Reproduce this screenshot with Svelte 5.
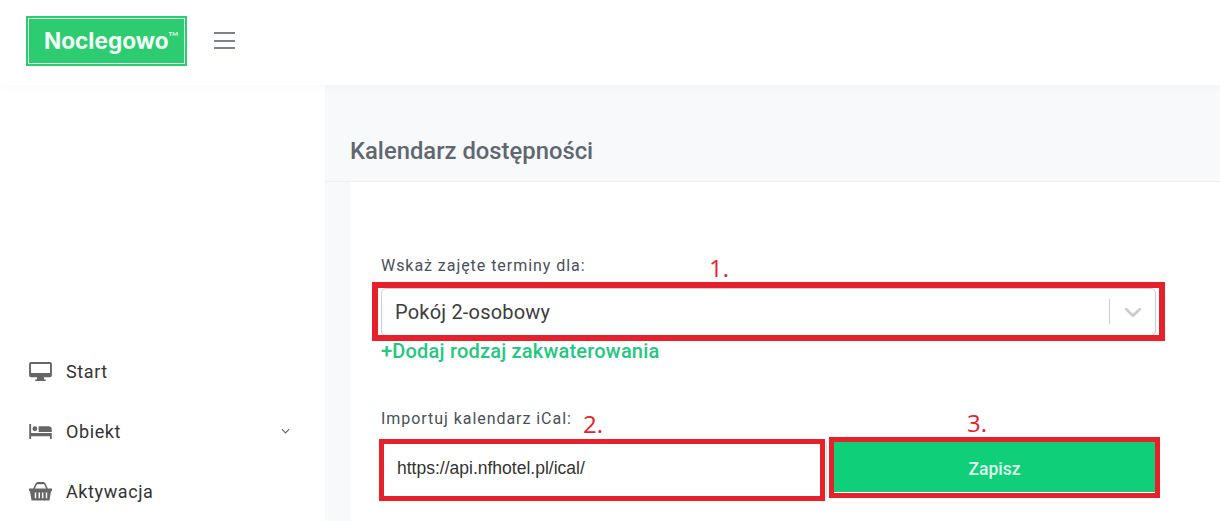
<script>
  // Sidebar entries, icons are drawn in the markup below
  const urlValue = "https://api.nfhotel.pl/ical/";
</script>

<div class="page">
  <header class="topbar">
    <div class="logo">
      <span class="logo-text">Noclegowo</span><span class="tm">TM</span>
    </div>
    <button class="burger" aria-label="Menu">
      <span></span><span></span><span></span>
    </button>
  </header>

  <div class="body">
    <aside class="sidebar">
      <nav>
        <a class="item" href="#start">
          <svg viewBox="0 0 24 20" width="22" height="19">
            <path fill="#666" d="M2 0h20a2 2 0 0 1 2 2v12a2 2 0 0 1-2 2h-6.500l.5 2.500h1.500V20H6.500v-1.500H8l.5-2.500H2a2 2 0 0 1-2-2V2a2 2 0 0 1 2-2zm0 2v9.500h20V2z" />
          </svg>
          <span>Start</span>
        </a>
        <a class="item" href="#obiekt">
          <svg viewBox="0 0 24 16" width="23" height="15">
            <path fill="#666" d="M0 0h2v9.500h22V16h-2v-3H2v3H0z" />
            <circle fill="#666" cx="6" cy="5" r="2.600" />
            <path fill="#666" d="M10 2.500h10.500A3.500 3.500 0 0 1 24 6v2.500H10z" />
          </svg>
          <span>Obiekt</span>
          <svg class="caret" viewBox="0 0 10 6" width="9" height="6">
            <path d="M1 1l4 4 4-4" fill="none" stroke="#666" stroke-width="1.300" />
          </svg>
        </a>
        <a class="item" href="#aktywacja">
          <svg viewBox="0 0 24 20" width="23" height="20">
            <path d="M5 8l2.500-5.500a1 1 0 0 1 1-.5h7a1 1 0 0 1 1 .5L19 8" fill="none" stroke="#666" stroke-width="1.600" />
            <rect x="8" y="0.500" width="8" height="2.500" rx="1.200" fill="#666" />
            <path fill="#666" fill-rule="evenodd" d="M0 7.500h24V10h-1l-1.500 9a1 1 0 0 1-1 1h-17a1 1 0 0 1-1-1L1 10H0zM6 11.500v6h1.500v-6zm4 0v6h1.500v-6zm3.500 0v6H15v-6zm4 0v6H19v-6z" />
          </svg>
          <span>Aktywacja</span>
        </a>
      </nav>
    </aside>

    <main class="main">
      <div class="title-bar">
        <h1>Kalendarz dostępności</h1>
      </div>
      <section class="card">
        <div class="field">
          <label for="room">Wskaż zajęte terminy dla:</label>
          <div class="select-wrap">
            <div class="select" id="room">
              <span class="select-value">Pokój 2-osobowy</span>
              <span class="sep"></span>
              <svg class="chevron" viewBox="0 0 20 20" width="28" height="28">
                <path fill="#ccc" d="M4.500 7.400c.4-.4 1-.4 1.400 0L10 11.300l4.100-3.900c.4-.4 1-.4 1.400 0 .4.400.4 1 0 1.400l-4.800 4.600a1 1 0 0 1-1.400 0L4.500 8.800c-.4-.4-.4-1 0-1.400z" />
              </svg>
            </div>
            <span class="mark mark-select"></span>
            <span class="num num-1">1.</span>
          </div>
          <a class="add-link" href="#dodaj">+Dodaj rodzaj zakwaterowania</a>
        </div>

        <div class="field import">
          <label for="ical">Importuj kalendarz iCal:</label>
          <div class="import-row">
            <div class="input-wrap">
              <input id="ical" type="text" value={urlValue} />
              <span class="mark mark-input"></span>
              <span class="num num-2">2.</span>
            </div>
            <div class="button-wrap">
              <button class="save" type="button">Zapisz</button>
              <span class="mark mark-button"></span>
              <span class="num num-3">3.</span>
            </div>
          </div>
        </div>
      </section>
    </main>
  </div>
</div>

<style>
  :global(body) {
    margin: 0;
    background: #fff;
  }

  .page {
    height: 521px;
    overflow: hidden;
    font-family: Roboto, "Liberation Sans", sans-serif;
    color: #343a40;
  }

  .topbar {
    height: 85px;
    box-sizing: border-box;
    display: flex;
    align-items: center;
    padding: 0 0 4px 26px;
    background: #fff;
    position: relative;
    box-shadow: 0 0 12px rgba(0, 0, 0, 0.04);
  }

  .logo {
    width: 161px;
    height: 50px;
    box-sizing: border-box;
    background: #2ecc71;
    border: 2px solid #2ecc71;
    outline: 1.5px solid #d8f7e4;
    outline-offset: -3.5px;
    padding-left: 16px;
    display: flex;
    align-items: center;
    color: #f2fff7;
  }

  .logo-text {
    font-family: Inter, sans-serif;
    font-weight: 700;
    font-size: 22.600px;
  }

  .tm {
    font-family: Lato, sans-serif;
    font-size: 6px;
    font-weight: 700;
    margin-bottom: 15px;
  }

  .burger {
    margin-left: 27px;
    width: 21px;
    height: 17px;
    padding: 0;
    border: none;
    background: none;
    display: flex;
    flex-direction: column;
    justify-content: space-between;
  }

  .burger span {
    display: block;
    height: 2px;
    background: #7b8290;
  }

  .body {
    display: flex;
    height: 436px;
  }

  .sidebar {
    width: 325px;
    flex-shrink: 0;
    background: #fff;
    padding-top: 256px;
    box-sizing: border-box;
  }

  .item {
    display: flex;
    align-items: center;
    height: 60px;
    padding: 0 35px 0 29px;
    color: #333;
    text-decoration: none;
    font-size: 18px;
    letter-spacing: 0.6px;
  }

  .item svg:first-child {
    width: 23px;
    margin-right: 14px;
  }

  .item .caret {
    margin-left: auto;
  }

  .main {
    flex: 1;
    background: #f8f9fa;
    min-width: 0;
  }

  .title-bar {
    height: 97px;
    box-sizing: border-box;
    padding: 53px 0 0 25px;
    border-bottom: 1px solid #eef0f2;
  }

  h1 {
    margin: 0;
    font-size: 23.800px;
    line-height: 26px;
    font-weight: 500;
    color: #5f6771;
  }

  .card {
    margin-left: 25px;
    height: 339px;
    background: #fff;
    padding: 74px 64px 0 31px;
    box-sizing: border-box;
  }

  label {
    display: block;
    font-size: 16px;
    line-height: 20px;
    letter-spacing: 0.95px;
    color: #495057;
    margin-bottom: 12px;
  }

  .select-wrap,
  .input-wrap,
  .button-wrap {
    position: relative;
  }

  .select {
    height: 48px;
    box-sizing: border-box;
    border: 1px solid #ccc;
    border-radius: 5px;
    display: flex;
    align-items: center;
    padding: 0 8px 1px 13px;
    background: #fff;
  }

  .select-value {
    flex: 1;
    font-size: 20px;
    letter-spacing: 0.2px;
    color: #3d3d3d;
  }

  .sep {
    width: 1px;
    height: 25px;
    background: #ccc;
    margin-right: 9px;
  }

  .add-link {
    display: block;
    margin-top: 3px;
    font-size: 20px;
    line-height: 24px;
    font-weight: 500;
    letter-spacing: 0.2px;
    color: #25c77f;
    text-decoration: none;
  }

  .import {
    margin-top: 46px;
  }

  .import label {
    margin-bottom: 13px;
  }

  .import-row {
    display: flex;
    align-items: flex-start;
    gap: 7px;
    margin-right: 1px;
  }

  .input-wrap {
    width: 446px;
  }

  input {
    display: block;
    width: 100%;
    height: 55px;
    box-sizing: border-box;
    padding: 0 15px 3px;
    border: 1px solid #ddd;
    font-family: "Liberation Sans", Arial, sans-serif;
    font-size: 17.500px;
    color: #333;
    background: #fff;
    outline: none;
  }

  .button-wrap {
    flex: 1;
  }

  .save {
    display: block;
    width: 100%;
    height: 50px;
    padding: 3px 0 0;
    border: none;
    background: #10cf79;
    color: #dffbed;
    font-family: Roboto, sans-serif;
    font-size: 17.500px;
    font-weight: 500;
  }

  /* red annotations sit over the form controls */
  .mark {
    position: absolute;
    box-sizing: border-box;
    border-style: solid;
    border-color: #e6212c;
    pointer-events: none;
  }

  .mark-select {
    inset: -6px -9px -5px -9px;
    border-width: 6px;
  }

  .mark-input {
    inset: -3px 2px -4px -2px;
    border-width: 5px;
  }

  .mark-button {
    inset: -5px -5px -6px -5px;
    border-width: 5px;
  }

  .num {
    position: absolute;
    font-family: "Open Sans", sans-serif;
    font-size: 24px;
    line-height: 30px;
    color: #e6212c;
  }

  .num-1 {
    left: 328px;
    top: -35px;
  }

  .num-2 {
    left: 202px;
    top: -33px;
  }

  .num-3 {
    left: 133px;
    top: -34px;
  }
</style>
